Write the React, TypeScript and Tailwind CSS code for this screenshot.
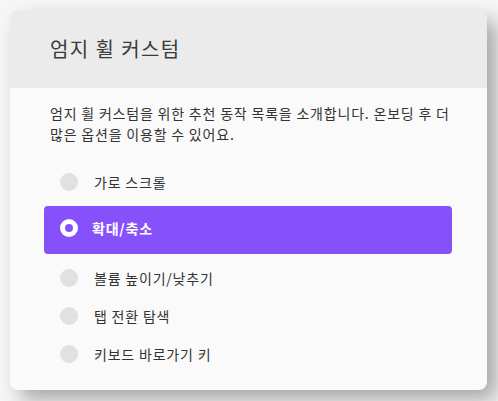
import React from "react";

const options = [
  { label: "가로 스크롤", selected: false },
  { label: "확대/축소", selected: true },
  { label: "볼륨 높이기/낮추기", selected: false },
  { label: "탭 전환 탐색", selected: false },
  { label: "키보드 바로가기 키", selected: false },
];

export default function App() {
  return (
    <div
      className="w-[498px] h-[401px] bg-[#f6f6f6] pl-[10px] pt-[10px] overflow-hidden"
      style={{ fontFamily: '"Noto Sans CJK KR", "Noto Sans", sans-serif' }}
    >
      <div className="w-[477px] h-[380px] rounded-[8px] bg-[#fafafa] overflow-hidden shadow-[10px_10px_20px_rgba(0,0,0,0.32)] flex flex-col">
        <div className="h-[78px] bg-[#ebebeb] flex items-center pl-[40px]">
          <h1 className="text-[20px] tracking-[1.4px] text-[#3a3a3a] font-normal leading-none">엄지 휠 커스텀</h1>
        </div>
        <div className="flex flex-col pt-[15px] pl-[34px] pr-[35px]">
          <p className="w-[412px] pl-[6px] text-[14px] tracking-[0.8px] leading-[21px] text-[#333333]">
            엄지 휠 커스텀을 위한 추천 동작 목록을 소개합니다. 온보딩 후 더 많은 옵션을 이용할 수 있어요.
          </p>
          <div className="mt-[18px] flex flex-col">
            {options.map((o) =>
              o.selected ? (
                <div
                  key={o.label}
                  className="h-[48px] my-[5px] rounded-[4px] bg-[#8650fa] flex items-center pl-[16px] pb-[4px] gap-[14px]"
                >
                  <span className="w-[18px] h-[18px] rounded-full bg-white flex items-center justify-center">
                    <span className="w-[8px] h-[8px] rounded-full bg-[#8650fa]" />
                  </span>
                  <span className="text-[14px] tracking-[0.8px] font-bold text-white leading-none">{o.label}</span>
                </div>
              ) : (
                <div key={o.label} className="h-[38px] flex items-center pl-[16px] gap-[16px]">
                  <span className="w-[18px] h-[18px] rounded-full bg-[#e1e1e4]" />
                  <span className="text-[14px] tracking-[0.8px] text-[#333333] leading-none">{o.label}</span>
                </div>
              )
            )}
          </div>
        </div>
      </div>
    </div>
  );
}
